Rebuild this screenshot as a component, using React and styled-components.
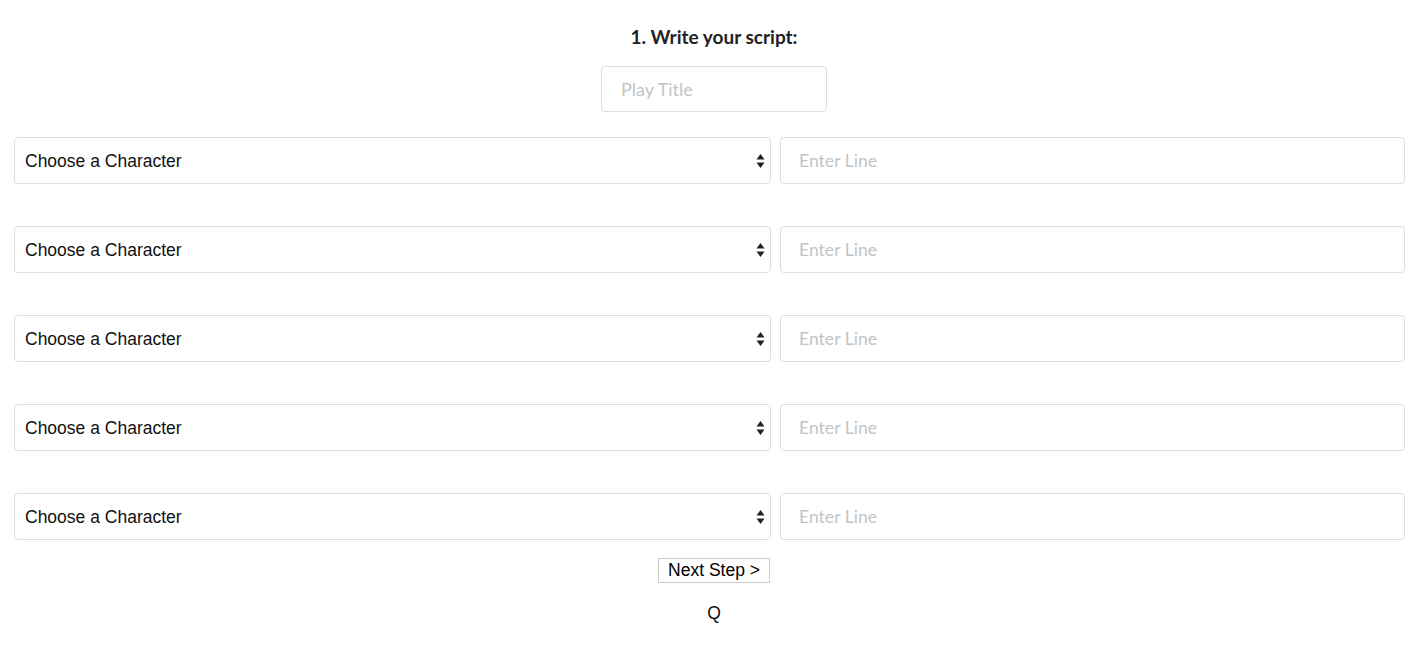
import React from 'react'
import styled, { createGlobalStyle } from 'styled-components'

const GlobalStyle = createGlobalStyle`
  body {
    margin: 0;
    background: #fff;
    font-family: Lato, "Liberation Sans", sans-serif;
  }
`

const Page = styled.div`
  padding-top: 26px;
`

const Centered = styled.div`
  display: flex;
  flex-direction: column;
  align-items: center;
  padding-left: 4px;
`

const Heading = styled.h3`
  margin: 0;
  font-family: Lato, sans-serif;
  font-weight: 700;
  font-size: 19px;
  line-height: 22px;
  color: #222;
`

const TitleInput = styled.input`
  box-sizing: border-box;
  margin-top: 18px;
  width: 226px;
  height: 46px;
  padding: 0 19px;
  border: 1px solid #ddd;
  border-radius: 4px;
  font-family: Lato, sans-serif;
  font-size: 18px;
  outline: none;
  &::placeholder { color: #c4c4c4; }
`

const Rows = styled.div`
  margin-top: 25px;
  padding: 0 19px 0 14px;
  display: flex;
  flex-direction: column;
  gap: 42px;
`

const Row = styled.div`
  display: flex;
  gap: 9px;
`

const SelectWrap = styled.div`
  position: relative;
  width: 757px;
  flex: none;
`

const Select = styled.select`
  box-sizing: border-box;
  width: 100%;
  height: 47px;
  padding: 0 30px 0 10px;
  border: 1px solid #ddd;
  border-radius: 4px;
  background: #fff;
  appearance: none;
  font-family: "Liberation Sans", Arial, sans-serif;
  font-size: 17.5px;
  color: #111;
  outline: none;
`

const Arrows = styled.svg`
  position: absolute;
  right: 6px;
  top: 16px;
  pointer-events: none;
`

const LineInput = styled.input`
  box-sizing: border-box;
  flex: 1;
  height: 47px;
  padding: 0 18px;
  border: 1px solid #ddd;
  border-radius: 4px;
  font-family: Lato, sans-serif;
  font-size: 17.6px;
  outline: none;
  &::placeholder { color: #c4c4c4; }
`

const NextButton = styled.button`
  margin-top: 18px;
  height: 25px;
  width: 112px;
  padding: 0;
  border: 1px solid #ccc;
  background: #fff;
  font-family: "Liberation Sans", Arial, sans-serif;
  font-size: 17.5px;
  color: #000;
`

const Quote = styled.p`
  margin: 20px 0 0;
  font-family: "Liberation Sans", Arial, sans-serif;
  font-size: 17.5px;
  line-height: 20px;
  color: #111;
`

function CharacterRow() {
  return (
    <Row>
      <SelectWrap>
        <Select defaultValue="">
          <option value="">Choose a Character</option>
        </Select>
        <Arrows width="9" height="16" viewBox="0 0 9 16">
          <path d="M4.5 1 L8.5 6.5 L0.5 6.5 Z" fill="#222" />
          <path d="M4.5 15 L8.5 9.5 L0.5 9.5 Z" fill="#222" />
        </Arrows>
      </SelectWrap>
      <LineInput placeholder="Enter Line" />
    </Row>
  )
}

export default function App() {
  return (
    <>
      <GlobalStyle />
      <Page>
        <Centered>
          <Heading>1. Write your script:</Heading>
          <TitleInput placeholder="Play Title" />
        </Centered>
        <Rows>
          {[0, 1, 2, 3, 4].map(i => <CharacterRow key={i} />)}
        </Rows>
        <Centered>
          <NextButton>Next Step &gt;</NextButton>
          <Quote>Q</Quote>
        </Centered>
      </Page>
    </>
  )
}
